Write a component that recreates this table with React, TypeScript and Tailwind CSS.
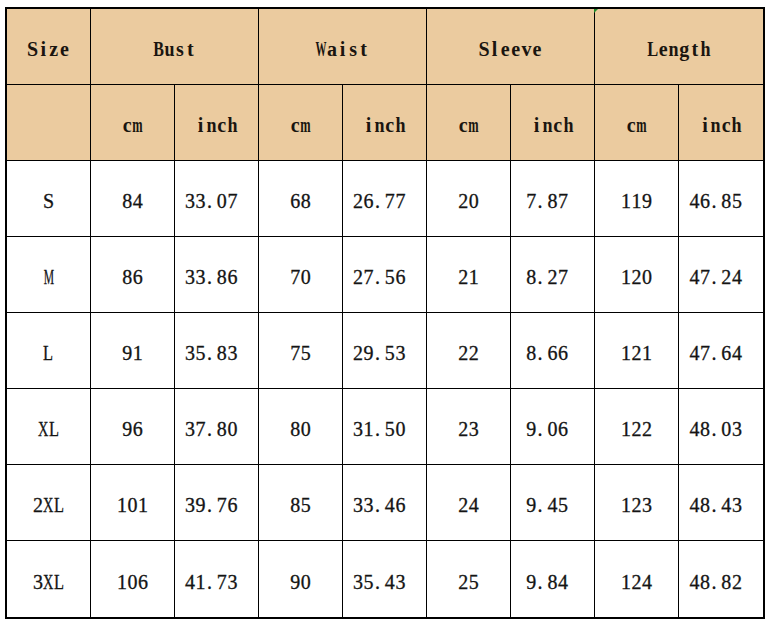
import React from "react";

const rows: string[][] = [
  ["S", "84", "33.07 ", "68", "26.77 ", "20", "7.87 ", "119", "46.85 "],
  ["M", "86", "33.86 ", "70", "27.56 ", "21", "8.27 ", "120", "47.24 "],
  ["L", "91", "35.83 ", "75", "29.53 ", "22", "8.66 ", "121", "47.64 "],
  ["XL", "96", "37.80 ", "80", "31.50 ", "23", "9.06 ", "122", "48.03 "],
  ["2XL", "101", "39.76 ", "85", "33.46 ", "24", "9.45 ", "123", "48.43 "],
  ["3XL", "106", "41.73 ", "90", "35.43 ", "25", "9.84 ", "124", "48.82 "],
];

const squeeze: Record<string, string> = {
  M: "scale-x-[0.58]",
  W: "scale-x-[0.55]",
  X: "scale-x-[0.72]",
  L: "scale-x-[0.82]",
  m: "scale-x-[0.62]",
  B: "scale-x-[0.8]",
  u: "scale-x-[0.9]",
  n: "scale-x-[0.9]",
  h: "scale-x-[0.9]",
};

function Mono({ v }: { v: string }) {
  return (
    <span className="flex">
      {v.split("").map((ch, i) =>
        ch === "." ? (
          <span key={i} className="inline-block w-[10.6px] text-left pl-[1px]">
            .
          </span>
        ) : ch === " " ? (
          <span key={i} className="inline-block w-[10.6px]">
            {"\u00a0"}
          </span>
        ) : (
          <span key={i} className="inline-flex w-[10.6px] justify-center">
            <span className={"inline-block " + (squeeze[ch] || "")}>{ch}</span>
          </span>
        )
      )}
    </span>
  );
}

const head =
  "flex items-center justify-center bg-[#ebcb9f] border-black pt-[4px] font-['Liberation_Serif',serif] font-bold text-[20px] text-[#1a1510]";
const body =
  "flex items-center justify-center bg-white border-black pt-[5px] font-['Liberation_Serif',serif] text-[20px] text-[#141414] [-webkit-text-stroke:0.3px_#141414]";

const sub = ["", "cm", "inch", "cm", "inch", "cm", "inch", "cm", "inch"];

export default function App() {
  return (
    <div className="w-[770px] h-[623px] bg-white pt-[7px] pl-[5px]">
      <div className="relative w-fit border-2 border-black grid grid-cols-[repeat(9,84px)] grid-rows-[repeat(8,76px)]">
        <div className={head + " border-r border-b"}>
          <Mono v="Size" />
        </div>
        <div className={head + " col-span-2 border-r border-b"}>
          <Mono v="Bust" />
        </div>
        <div className={head + " col-span-2 border-r border-b"}>
          <Mono v="Waist" />
        </div>
        <div className={head + " col-span-2 border-r border-b"}>
          <Mono v="Sleeve" />
        </div>
        <div className={head + " col-span-2 border-b"}>
          <Mono v="Length" />
        </div>

        {sub.map((s, i) => (
          <div key={"h" + i} className={head + " border-b" + (i < 8 ? " border-r" : "")}>
            <Mono v={s} />
          </div>
        ))}

        {rows.map((r, ri) =>
          r.map((c, ci) => (
            <div
              key={ri + "-" + ci}
              className={
                body +
                (ci < 8 ? " border-r" : "") +
                (ri < rows.length - 1 ? " border-b" : "")
              }
            >
              <Mono v={c} />
            </div>
          ))
        )}
        <span className="absolute top-0 left-[587px] w-0 h-0 border-l-[4px] border-l-[#1f8a2a] border-b-[4px] border-b-transparent"></span>
      </div>
    </div>
  );
}
